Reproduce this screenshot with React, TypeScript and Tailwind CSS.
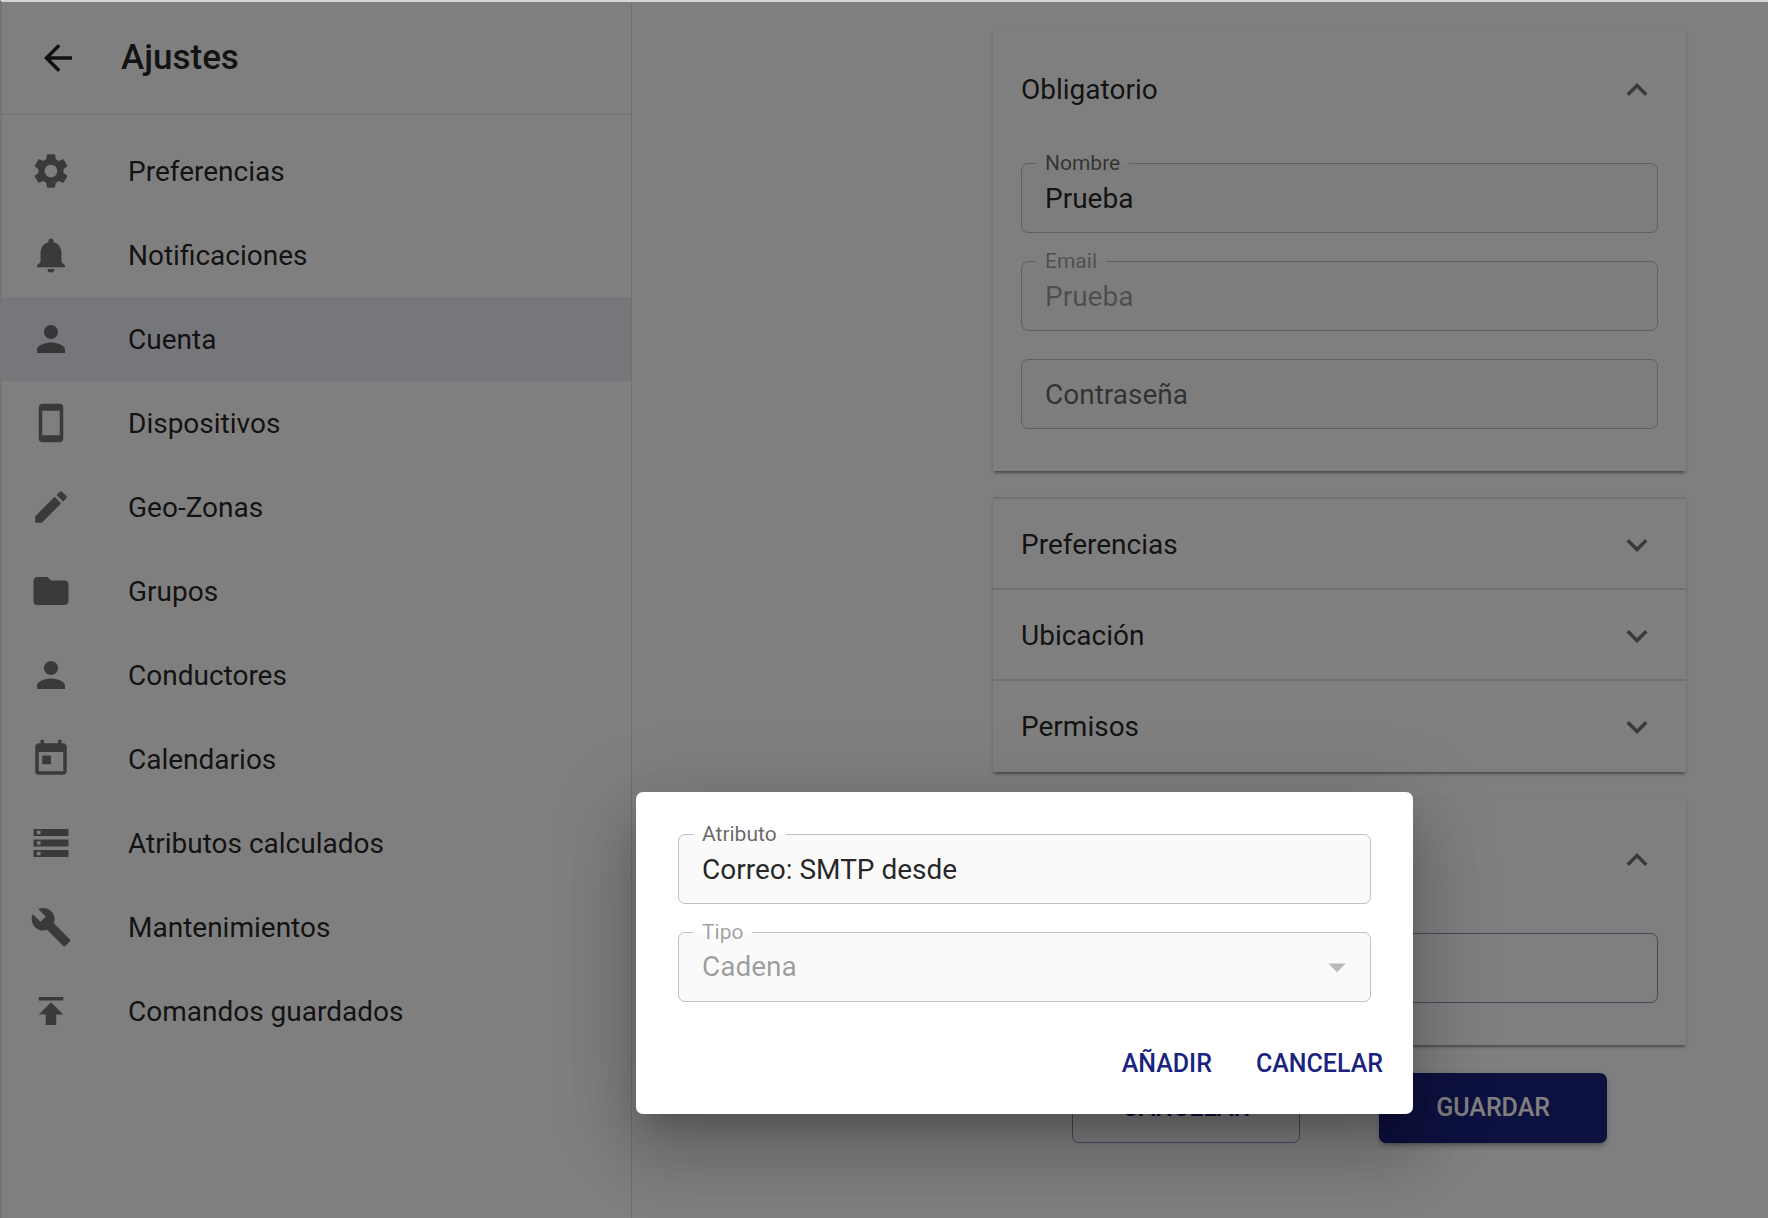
import { useId, type ReactNode } from "react"
import type { IconType } from "react-icons"
import {
  MdArrowBack,
  MdArrowDropDown,
  MdBuild,
  MdCreate,
  MdExpandLess,
  MdExpandMore,
  MdFolder,
  MdNotifications,
  MdPerson,
  MdPublish,
  MdSettings,
  MdSmartphone,
  MdStorage,
  MdToday,
} from "react-icons/md"

interface MenuItem {
  label: string
  icon: IconType
  selected?: boolean
}

const menuItems: MenuItem[] = [
  { label: "Preferencias", icon: MdSettings },
  { label: "Notificaciones", icon: MdNotifications },
  { label: "Cuenta", icon: MdPerson, selected: true },
  { label: "Dispositivos", icon: MdSmartphone },
  { label: "Geo-Zonas", icon: MdCreate },
  { label: "Grupos", icon: MdFolder },
  { label: "Conductores", icon: MdPerson },
  { label: "Calendarios", icon: MdToday },
  { label: "Atributos calculados", icon: MdStorage },
  { label: "Mantenimientos", icon: MdBuild },
  { label: "Comandos guardados", icon: MdPublish },
]

const paperShadow =
  "shadow-[0_4px_2px_-2px_rgba(0,0,0,0.2),0_2px_2px_0_rgba(0,0,0,0.14),0_2px_5px_0_rgba(0,0,0,0.12)]"

const controlClass =
  "block h-full w-full appearance-none rounded-[7px] bg-[#fafafa] px-6 text-[28px] text-black/87 outline-none placeholder:text-black/60 disabled:text-black/38 disabled:opacity-100"

function Outline({ htmlFor, label, disabled }: { htmlFor: string; label?: string; disabled?: boolean }) {
  if (!label) {
    return <div className="pointer-events-none absolute inset-0 rounded-[7px] border border-black/23" />
  }
  return (
    <fieldset className="pointer-events-none absolute inset-x-0 -top-3 bottom-0 rounded-[7px] border border-black/23">
      <legend className="ml-[14px] h-6 px-[9px] text-[21px] leading-6">
        <label htmlFor={htmlFor} className={disabled ? "text-black/38" : "text-black/60"}>
          {label}
        </label>
      </legend>
    </fieldset>
  )
}

interface TextFieldProps {
  label?: string
  value?: string
  placeholder?: string
  type?: string
  disabled?: boolean
}

function TextField({ label, value, placeholder, type = "text", disabled }: TextFieldProps) {
  const id = useId()
  return (
    <div className="relative h-[70px]">
      <input
        id={id}
        type={type}
        defaultValue={value}
        placeholder={placeholder}
        aria-label={label ? undefined : placeholder}
        disabled={disabled}
        className={controlClass}
      />
      <Outline htmlFor={id} label={label} disabled={disabled} />
    </div>
  )
}

function SelectField({ label, value }: { label: string; value: string }) {
  const id = useId()
  return (
    <div className="relative h-[70px]">
      <select id={id} defaultValue={value} disabled className={controlClass}>
        <option>{value}</option>
      </select>
      <MdArrowDropDown className="pointer-events-none absolute top-[14px] right-[13px] size-[42px] text-black/26" />
      <Outline htmlFor={id} label={label} disabled />
    </div>
  )
}

function ExpandedSection({ title, children }: { title?: string; children: ReactNode }) {
  return (
    <section className={`bg-white ${paperShadow}`}>
      <button
        type="button"
        aria-expanded="true"
        aria-label={title ? undefined : "Atributos"}
        className="flex h-[119px] w-full items-center px-7 text-left text-[28px] text-black/87"
      >
        <span className="flex-1">{title}</span>
        <MdExpandLess className="size-[42px] text-black/54" />
      </button>
      <div className="flex flex-col gap-7 px-7 pt-[14px] pb-[42px]">{children}</div>
    </section>
  )
}

function CollapsedSection({ title }: { title: string }) {
  return (
    <button
      type="button"
      aria-expanded="false"
      className="flex h-[91px] w-full items-center border-t-2 border-black/12 px-7 pt-0.5 text-left text-[28px] text-black/87"
    >
      <span className="flex-1">{title}</span>
      <MdExpandMore className="size-[42px] text-black/54" />
    </button>
  )
}

function Sidebar() {
  return (
    <aside className="w-[630px] shrink-0 border-r border-black/12">
      <header className="flex h-[113px] items-center gap-7 border-b-2 border-black/6 pl-[21px]">
        <button type="button" aria-label="Atrás" className="py-[14px] pl-[14px] text-black/87">
          <MdArrowBack className="size-[42px]" />
        </button>
        <h1 className="pt-0.5 pl-[14px] text-[35px] font-medium text-black/87">Ajustes</h1>
      </header>
      <nav className="py-[14px]">
        {menuItems.map((item) => (
          <a
            key={item.label}
            href="#"
            className={`flex h-[84px] items-center gap-14 px-7 text-[28px] text-black/87 ${
              item.selected ? "bg-[#1a237e]/8" : ""
            }`}
          >
            <item.icon className="size-[42px] text-black/54" />
            <span className="pt-0.5">{item.label}</span>
          </a>
        ))}
      </nav>
    </aside>
  )
}

function AttributeDialog() {
  const actionClass = "h-16 rounded-[7px] px-[14px] text-[25px] font-medium text-[#1a237e]"
  return (
    <div className="absolute inset-0 flex items-end justify-end bg-black/50 pr-[355px] pb-[104px]">
      <div
        role="dialog"
        aria-modal="true"
        className="w-full max-w-[777px] rounded-[7px] bg-white shadow-[0_19px_26px_-12px_rgba(0,0,0,0.2),0_42px_66px_5px_rgba(0,0,0,0.14),0_16px_80px_14px_rgba(0,0,0,0.12)]"
      >
        <div className="flex flex-col gap-7 px-[42px] pt-[42px]">
          <TextField label="Atributo" value="Correo: SMTP desde" />
          <SelectField label="Tipo" value="Cadena" />
        </div>
        <div className="flex justify-end gap-4 px-4 pt-[30px] pb-[18px]">
          <button type="button" className={actionClass}>
            AÑADIR
          </button>
          <button type="button" className={actionClass}>
            CANCELAR
          </button>
        </div>
      </div>
    </div>
  )
}

export default function App() {
  return (
    <div className="relative flex min-h-screen overflow-hidden border-t-2 border-l-2 border-t-[#d4d6d7] border-l-[#757575] bg-white font-['Roboto',sans-serif]">
      <Sidebar />
      <main className="flex flex-1 justify-end pt-7 pr-[82px]">
        <div className="flex w-full max-w-[693px] flex-col gap-7">
          <ExpandedSection title="Obligatorio">
            <TextField label="Nombre" value="Prueba" />
            <TextField label="Email" value="Prueba" disabled />
            <TextField placeholder="Contraseña" type="password" />
          </ExpandedSection>

          {/* the top divider sits just above the paper */}
          <div className={`-mt-0.5 bg-white pb-0.5 ${paperShadow}`}>
            <CollapsedSection title="Preferencias" />
            <CollapsedSection title="Ubicación" />
            <CollapsedSection title="Permisos" />
          </div>

          <ExpandedSection>
            <button
              type="button"
              aria-label="Añadir"
              className="h-[70px] rounded-[7px] border border-[#1a237e]/50"
            />
          </ExpandedSection>

          <div className="flex justify-evenly">
            <button
              type="button"
              className="h-[70px] w-[33%] rounded-[7px] border border-[#1a237e]/50 text-[25px] font-medium text-[#1a237e]"
            >
              CANCELAR
            </button>
            <button
              type="button"
              className="h-[70px] w-[33%] rounded-[7px] bg-[#1a237e] text-[25px] font-medium text-white shadow-[0_5px_2px_-4px_rgba(0,0,0,0.2),0_4px_4px_0_rgba(0,0,0,0.14),0_2px_9px_0_rgba(0,0,0,0.12)]"
            >
              GUARDAR
            </button>
          </div>
        </div>
      </main>
      <AttributeDialog />
    </div>
  )
}
